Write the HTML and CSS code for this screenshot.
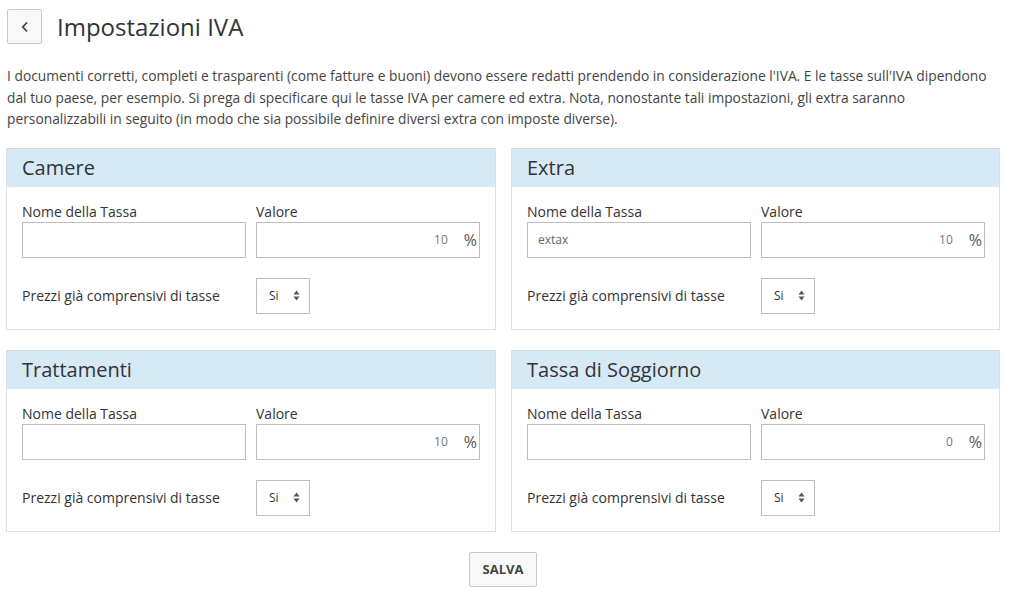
FILE: index.html
```html
<!DOCTYPE html>
<html lang="it">
<head>
<meta charset="utf-8">
<title>Impostazioni IVA</title>
<link rel="stylesheet" href="styles.css">
</head>
<body>
<div class="page">
  <div class="titlebar">
    <button class="back" type="button" aria-label="Indietro">
      <svg width="10" height="12" viewBox="0 0 10 12"><path d="M7 1.5 L2.8 6 L7 10.5" fill="none" stroke="#444" stroke-width="1.8"/></svg>
    </button>
    <h1>Impostazioni IVA</h1>
  </div>
  <p class="intro">I documenti corretti, completi e trasparenti (come fatture e buoni) devono essere redatti prendendo in considerazione l'IVA. E le tasse sull'IVA dipendono dal tuo paese, per esempio. Si prega di specificare qui le tasse IVA per camere ed extra. Nota, nonostante tali impostazioni, gli extra saranno personalizzabili in seguito (in modo che sia possibile definire diversi extra con imposte diverse).</p>

  <div class="panels">
    <section class="panel">
      <h2 class="panel-head">Camere</h2>
      <div class="panel-body">
        <div class="field"><label>Nome della Tassa</label><div class="input"></div></div>
        <div class="field"><label>Valore</label><div class="input num"><span class="val">10</span><span class="pct">%</span></div></div>
        <div class="incl">Prezzi già comprensivi di tasse</div>
        <div class="select-wrap"><div class="select"><span>Si</span><svg width="7" height="11" viewBox="0 0 7 11"><path d="M3.5 0.5 L6.5 4.5 L0.5 4.5Z M3.5 10.5 L6.5 6.5 L0.5 6.5Z" fill="#555"/></svg></div></div>
      </div>
    </section>
    <section class="panel">
      <h2 class="panel-head">Extra</h2>
      <div class="panel-body">
        <div class="field"><label>Nome della Tassa</label><div class="input"><span class="txt">extax</span></div></div>
        <div class="field"><label>Valore</label><div class="input num"><span class="val">10</span><span class="pct">%</span></div></div>
        <div class="incl">Prezzi già comprensivi di tasse</div>
        <div class="select-wrap"><div class="select"><span>Si</span><svg width="7" height="11" viewBox="0 0 7 11"><path d="M3.5 0.5 L6.5 4.5 L0.5 4.5Z M3.5 10.5 L6.5 6.5 L0.5 6.5Z" fill="#555"/></svg></div></div>
      </div>
    </section>
    <section class="panel">
      <h2 class="panel-head">Trattamenti</h2>
      <div class="panel-body">
        <div class="field"><label>Nome della Tassa</label><div class="input"></div></div>
        <div class="field"><label>Valore</label><div class="input num"><span class="val">10</span><span class="pct">%</span></div></div>
        <div class="incl">Prezzi già comprensivi di tasse</div>
        <div class="select-wrap"><div class="select"><span>Si</span><svg width="7" height="11" viewBox="0 0 7 11"><path d="M3.5 0.5 L6.5 4.5 L0.5 4.5Z M3.5 10.5 L6.5 6.5 L0.5 6.5Z" fill="#555"/></svg></div></div>
      </div>
    </section>
    <section class="panel">
      <h2 class="panel-head">Tassa di Soggiorno</h2>
      <div class="panel-body">
        <div class="field"><label>Nome della Tassa</label><div class="input"></div></div>
        <div class="field"><label>Valore</label><div class="input num"><span class="val">0</span><span class="pct">%</span></div></div>
        <div class="incl">Prezzi già comprensivi di tasse</div>
        <div class="select-wrap"><div class="select"><span>Si</span><svg width="7" height="11" viewBox="0 0 7 11"><path d="M3.5 0.5 L6.5 4.5 L0.5 4.5Z M3.5 10.5 L6.5 6.5 L0.5 6.5Z" fill="#555"/></svg></div></div>
      </div>
    </section>
  </div>

  <div class="actions"><button class="save" type="button">SALVA</button></div>
</div>
</body>
</html>
```

FILE: styles.css
```css
* { box-sizing: border-box; }
html, body { margin: 0; padding: 0; background: #fff; }
body {
  font-family: "Open Sans", "Liberation Sans", sans-serif;
  color: #333;
  font-size: 14px;
}
.page {
  padding: 9px 13px 0 6px;
}
.titlebar {
  display: flex;
  align-items: center;
  gap: 16px;
  height: 35px;
}
.back {
  width: 35px;
  height: 35px;
  margin-left: 1px;
  border: 1px solid #c8c8c8;
  border-radius: 2px;
  background: #f8f8f8;
  display: flex;
  align-items: center;
  justify-content: center;
  padding: 0;
}
h1 {
  margin: 0 0 0 -1px;
  font-size: 24px;
  font-weight: 400;
  color: #333;
  line-height: 35px;
}
.intro {
  margin: 21px 0 0 1px;
  line-height: 21.5px;
  font-size: 13.8px;
  color: #444;
}
.panels {
  margin-top: 18px;
  display: grid;
  grid-template-columns: 490px 489px;
  column-gap: 15px;
  row-gap: 20px;
}
.panel {
  border: 1px solid #dfdfdf;
  border-top-color: #d8d8d8;
}
.panel-head {
  margin: 0;
  background: #d6e9f6;
  font-size: 20px;
  font-weight: 400;
  color: #333;
  height: 38px;
  line-height: 38px;
  padding-left: 15px;
}
.panel-body {
  display: grid;
  grid-template-columns: 224px 224px;
  column-gap: 10px;
  row-gap: 20px;
  padding: 15px;
  align-items: center;
}
.field label {
  display: block;
  line-height: 20px;
  font-size: 14px;
  color: #333;
}
.input {
  height: 36px;
  border: 1px solid #bdbdbd;
  display: flex;
  align-items: center;
  padding: 0 10px;
}
.input .txt {
  font-size: 12px;
  color: #666;
}
.input.num {
  justify-content: flex-end;
  padding-right: 2px;
}
.val {
  font-size: 12px;
  color: #777;
  margin-right: 16px;
}
.pct {
  font-size: 16px;
  color: #555;
}
.incl {
  font-size: 14px;
  color: #333;
}
.select-wrap { display: flex; }
.select {
  width: 54px;
  height: 36px;
  border: 1px solid #bdbdbd;
  display: flex;
  align-items: center;
  justify-content: space-between;
  padding: 0 9px 0 12px;
  font-size: 12px;
  color: #333;
}
.actions {
  display: flex;
  justify-content: center;
  margin-top: 20px;
}
.save {
  width: 68px;
  height: 35px;
  border: 1px solid #c8c8c8;
  border-radius: 2px;
  background: #f8f8f8;
  font-family: "Open Sans", "Liberation Sans", sans-serif;
  font-weight: 700;
  font-size: 13px;
  color: #444;
  padding: 0;
}
```
